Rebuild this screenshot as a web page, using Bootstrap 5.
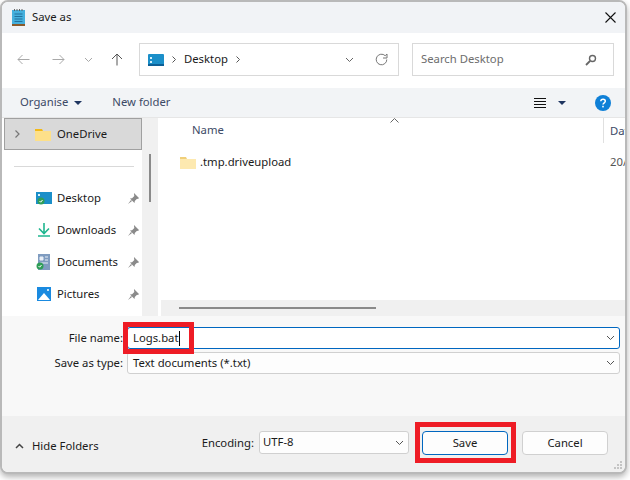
<!DOCTYPE html>
<html lang="en">
<head>
    <meta charset="UTF-8">
    <meta name="viewport" content="width=device-width, initial-scale=1.0">
    <title>Save as</title>
    <link rel="stylesheet" href="https://cdn.jsdelivr.net/npm/bootstrap@5.3.0/dist/css/bootstrap.min.css">
    <style>
        html, body { height: 480px; overflow: hidden; }
        body { background: #fff; font-family: "Noto Sans", "Open Sans", sans-serif; font-size: 11.3px; color: #1a1a1a; }
        .dlg-window { position: relative; width: 627px; height: 474px; background: #fff; border: 2px solid #b9b9b9; border-radius: 8px; overflow: hidden; box-shadow: 0 3px 6px rgba(0,0,0,.3); }
        .dlg-title { height: 31px; background: #f1f3f6; padding-left: 10px; }
        .dlg-title span { margin-left: 7px; }
        .dlg-close { margin-left: auto; margin-right: 9px; }
        .dlg-nav { height: 55px; padding: 10px 10px 12px 15px; }
        .nav-arrows { width: 122px; gap: 0; }
        .address-box { width: 260px; height: 33px; border: 1px solid #d9d9d9; padding: 0 8px; }
        .search-box { width: 202px; height: 33px; border: 1px solid #d9d9d9; padding: 0 8px; margin-left: 13px; color: #6d6d6d; }
        .dlg-cmd { height: 30px; background: #f2f4f6; border-bottom: 1px solid #e6e6e6; padding: 0 14px 0 18px; color: #3d4a66; }
        .dlg-body { height: 198px; }
        .side-pane { width: 140px; padding-left: 2px; }
        .side-sel { height: 32px; background: #d9d9d9; border: 1px solid #a0a0a0; padding-left: 10px; }
        .side-rule { height: 1px; background: #d9d9d9; margin: 16px 8px 15px 10px; }
        .side-row { height: 32px; padding-left: 32px; }
        .side-row span { width: 71px; margin-left: 5px; }
        .side-scroll { width: 16px; background: #f0f0f0; padding: 36px 0 0 7px; }
        .side-thumb { width: 2px; height: 48px; background: #8a8a8a; }
        .list-pane { margin-left: 3px; min-width: 0; position: relative; }
        .list-head { height: 25px; padding-left: 31px; color: #3d4a66; }
        .list-head .col-date { margin-left: auto; width: 22px; height: 25px; border-left: 1px solid #e0e0e0; padding-left: 6px; line-height: 25px; }
        .list-row { height: 24px; margin-top: 7px; padding-left: 19px; white-space: nowrap; }
        .list-row .file-date { margin-left: auto; width: 15px; color: #555; }
        .hscroll { height: 16px; background: #f0f0f0; padding: 7px 0 0 18px; margin-top: auto; }
        .hthumb { width: 197px; height: 2px; background: #8a8a8a; }
        .sort-mark { position: absolute; left: 229px; top: 0; }
        .dlg-form { height: 100px; background: #f8f8f8; padding: 11px 5px 0 0; }
        .form-line { height: 22px; margin-bottom: 3px; }
        .form-line label { width: 125px; text-align: right; padding-right: 4px; }
        .fake-input { flex: 1; height: 22px; border: 1px solid #d0d0d0; border-radius: 3px; background: #fdfdfd; padding: 0 4px 0 5px; }
        .fake-input.is-active { background: #fff; border-color: #0067c0; }
        .caret-bar { display: inline-block; width: 1px; height: 15px; background: #000; }
        .dlg-foot { height: 56px; background: #f0f0f0; padding: 15px 17px 0 13px; }
        .hide-link { margin-top: 7px; }
        .enc-label { margin-left: auto; margin-right: 5px; margin-top: 4px; }
        .enc-select { width: 150px; height: 23px; border: 1px solid #d0d0d0; border-radius: 3px; background: #fdfdfd; padding: 0 4px 0 3px; margin-right: 13px; }
        .dlg-btn { width: 86px; height: 24px; border: 1px solid #d0d0d0; border-radius: 4px; background: #fdfdfd; font-size: 11.3px; padding: 0; color: #1a1a1a; }
        .dlg-btn.is-default { border-color: #0067c0; margin-right: 14px; }
        .red-mark { position: absolute; border: 5px solid #ee1c25; }
        .mark-file { left: 121px; top: 320px; width: 71px; height: 32px; }
        .mark-save { left: 413px; top: 420px; width: 101px; height: 41px; }
        .grip { position: absolute; right: 2px; bottom: 2px; }
    </style>
</head>
<body>
    <div class="dlg-window d-flex flex-column">
        <!-- Title bar -->
        <div class="dlg-title d-flex align-items-center">
            <svg width="13" height="17" viewBox="0 0 13 17"><rect x="0" y="1" width="13" height="15" fill="#45b0dd"/><rect x="0" y="15" width="13" height="2" fill="#8a5a2b"/><path d="M2.500 5h8M2.500 7.500h8M2.500 10h8M2.500 12.500h8" stroke="#1d6a96" stroke-width=".9"/><path d="M2.500 0v2M5 0v2M7.500 0v2M10 0v2" stroke="#555" stroke-width=".9"/></svg>
            <span>Save as</span>
            <svg class="dlg-close" width="11" height="11" viewBox="0 0 11 11"><path d="M.5.500l10 10M10.500.500l-10 10" stroke="#111" stroke-width="1.100"/></svg>
        </div>

        <!-- Back / forward / address / search -->
        <div class="dlg-nav d-flex align-items-center">
            <div class="nav-arrows d-flex align-items-center">
                <svg width="13" height="11" viewBox="0 0 13 11" style="margin-right:22px"><path d="M12.500 5.500H1M5.500 1L1 5.500 5.500 10" fill="none" stroke="#a8a8a8"/></svg>
                <svg width="13" height="11" viewBox="0 0 13 11" style="margin-right:19px"><path d="M.5 5.500H12M7.500 1L12 5.500 7.500 10" fill="none" stroke="#a8a8a8"/></svg>
                <svg width="9" height="6" viewBox="0 0 9 6" style="margin-right:18px"><path d="M1 1l3.500 3.500L8 1" fill="none" stroke="#a8a8a8"/></svg>
                <svg width="12" height="13" viewBox="0 0 12 13"><path d="M6 12.500V1M1 6l5-5 5 5" fill="none" stroke="#555"/></svg>
            </div>
            <div class="address-box d-flex align-items-center">
                <svg width="16" height="12" viewBox="0 0 16 12"><rect width="16" height="12" rx="1" fill="#1b8fc9"/><rect x="2" y="3" width="2" height="2" fill="#d8f1fb"/><rect x="2" y="7" width="2" height="2" fill="#d8f1fb"/><rect y="10" width="16" height="2" fill="#0d5f96"/></svg>
                <svg class="ms-2" width="4" height="7" viewBox="0 0 4 7"><path d="M.5.500l3 3-3 3" fill="none" stroke="#555"/></svg>
                <span class="ms-2">Desktop</span>
                <svg class="ms-2" width="4" height="7" viewBox="0 0 4 7"><path d="M.5.500l3 3-3 3" fill="none" stroke="#555"/></svg>
                <svg class="ms-auto" width="9" height="6" viewBox="0 0 9 6"><path d="M1 1l3.500 3.500L8 1" fill="none" stroke="#666"/></svg>
                <svg style="margin-left:21px;margin-right:2px" width="13" height="13" viewBox="0 0 13 13"><path d="M11.800 6.500a5.300 5.300 0 1 1-1.600-3.800L12 1v4H8" fill="none" stroke="#777"/></svg>
            </div>
            <div class="search-box d-flex align-items-center justify-content-between">
                <span>Search Desktop</span>
                <svg class="me-2" width="12" height="12" viewBox="0 0 12 12"><circle cx="7.500" cy="4.500" r="3" fill="none" stroke="#666" stroke-width="1.400"/><path d="M5 7l-4 4" stroke="#666" stroke-width="1.800"/></svg>
            </div>
        </div>

        <!-- Command bar -->
        <div class="dlg-cmd d-flex align-items-center">
            <span>Organise</span>
            <svg style="margin-left:6px" width="8" height="4" viewBox="0 0 8 4"><path d="M0 0h8L4 4z" fill="#1f3560"/></svg>
            <span style="margin-left:30px">New folder</span>
            <svg class="ms-auto" width="12" height="10" viewBox="0 0 12 10"><path d="M0 .500h12M0 3.500h12M0 6.500h12M0 9.500h12" stroke="#111"/></svg>
            <svg style="margin-left:12px;margin-right:29px" width="8" height="4" viewBox="0 0 8 4"><path d="M0 0h8L4 4z" fill="#1f3560"/></svg>
            <svg width="16" height="16" viewBox="0 0 16 16"><circle cx="8" cy="8" r="8" fill="#0f80d7"/><path d="M5.800 6.200C5.900 3.600 10.300 3.600 10.300 6.200 10.300 7.800 8 7.800 8 9.600" fill="none" stroke="#fff" stroke-width="1.500"/><rect x="7.200" y="10.800" width="1.600" height="1.600" fill="#fff"/></svg>
        </div>

        <!-- Folder tree and file list -->
        <div class="dlg-body d-flex">
            <div class="side-pane flex-shrink-0">
                <div class="side-sel d-flex align-items-center">
                    <svg width="5" height="8" viewBox="0 0 5 8"><path d="M.5.500L4 4 .5 7.500" fill="none" stroke="#777" stroke-width="1.200"/></svg>
                    <svg style="margin-left:15px" width="16" height="13" viewBox="0 0 16 13"><path d="M0 1h7l1 2h8v10H0z" fill="#f3b917"/><rect y="3" width="16" height="10" fill="#fde08a"/></svg>
                    <span style="margin-left:6px">OneDrive</span>
                </div>
                <div class="side-rule"></div>
                <div class="side-row d-flex align-items-center">
                    <svg width="16" height="13" viewBox="0 0 16 13"><rect width="16" height="12" fill="#1b8fc9"/><rect x="2" y="2" width="2" height="2" fill="#d8f1fb"/><circle cx="5" cy="9" r="3.500" fill="#2f9e58"/><path d="M3.500 9l1.200 1.200L6.500 8" fill="none" stroke="#fff"/></svg>
                    <span>Desktop</span>
                    <svg width="11" height="11" viewBox="0 0 11 11"><path d="M6 0l5 5-1 1-1-.3-2.200 2.200-.3 2.100-4.500-4.500 2.100-.3L6.300 3 6 1zM3 7L0 11l4-3z" fill="#8a8a8a"/></svg>
                </div>
                <div class="side-row d-flex align-items-center">
                    <svg width="16" height="14" viewBox="0 0 16 14"><path d="M8 0v10M3 5.500L8 10.500l5-5" fill="none" stroke="#1fb68f" stroke-width="1.600"/><path d="M2 13h12" stroke="#1fb68f" stroke-width="1.600"/></svg>
                    <span>Downloads</span>
                    <svg width="11" height="11" viewBox="0 0 11 11"><path d="M6 0l5 5-1 1-1-.3-2.200 2.200-.3 2.100-4.500-4.500 2.100-.3L6.300 3 6 1zM3 7L0 11l4-3z" fill="#8a8a8a"/></svg>
                </div>
                <div class="side-row d-flex align-items-center">
                    <svg width="16" height="16" viewBox="0 0 16 16"><rect x="2" width="12" height="16" fill="#7f9cc0"/><path d="M4 3h3v3H4zM9 3h3M9 6h3M4 9h8" fill="#e8eef6" stroke="#e8eef6"/><circle cx="4" cy="12" r="3.500" fill="#2f9e58"/><path d="M2.500 12l1.200 1.200L5.500 11" fill="none" stroke="#fff"/></svg>
                    <span>Documents</span>
                    <svg width="11" height="11" viewBox="0 0 11 11"><path d="M6 0l5 5-1 1-1-.3-2.200 2.200-.3 2.100-4.500-4.500 2.100-.3L6.300 3 6 1zM3 7L0 11l4-3z" fill="#8a8a8a"/></svg>
                </div>
                <div class="side-row d-flex align-items-center">
                    <svg width="16" height="14" viewBox="0 0 16 14"><rect x="1" width="14" height="14" fill="#1a8ae0"/><path d="M2 13l6-7 6 7z" fill="#fff"/><circle cx="12" cy="3" r="1" fill="#fff"/></svg>
                    <span>Pictures</span>
                    <svg width="11" height="11" viewBox="0 0 11 11"><path d="M6 0l5 5-1 1-1-.3-2.200 2.200-.3 2.100-4.500-4.500 2.100-.3L6.300 3 6 1zM3 7L0 11l4-3z" fill="#8a8a8a"/></svg>
                </div>
            </div>
            <div class="side-scroll flex-shrink-0"><div class="side-thumb"></div></div>
            <div class="list-pane flex-grow-1 d-flex flex-column">
                <svg class="sort-mark" width="9" height="5" viewBox="0 0 9 5"><path d="M.5 4.500l4-4 4 4" fill="none" stroke="#666"/></svg>
                <div class="list-head d-flex align-items-center"><span>Name</span><span class="col-date">Dat</span></div>
                <div class="list-row d-flex align-items-center">
                    <svg width="16" height="13" viewBox="0 0 16 13"><path d="M0 1h6l1 2h9v10H0z" fill="#f0cf7a"/><rect y="3" width="16" height="10" fill="#fde9b0"/></svg>
                    <span style="margin-left:4px">.tmp.driveupload</span>
                    <span class="file-date">20/</span>
                </div>
                <div class="hscroll"><div class="hthumb"></div></div>
            </div>
        </div>

        <!-- File name and type -->
        <div class="dlg-form">
            <div class="form-line d-flex align-items-center">
                <label>File name:</label>
                <div class="fake-input is-active d-flex align-items-center">
                    <span>Logs.bat</span><span class="caret-bar"></span>
                    <svg class="ms-auto" width="9" height="6" viewBox="0 0 9 6"><path d="M1 1l3.500 3.500L8 1" fill="none" stroke="#555"/></svg>
                </div>
            </div>
            <div class="form-line d-flex align-items-center">
                <label>Save as type:</label>
                <div class="fake-input d-flex align-items-center">
                    <span>Text documents (*.txt)</span>
                    <svg class="ms-auto" width="9" height="6" viewBox="0 0 9 6"><path d="M1 1l3.500 3.500L8 1" fill="none" stroke="#555"/></svg>
                </div>
            </div>
        </div>

        <!-- Footer -->
        <div class="dlg-foot d-flex align-items-start">
            <div class="hide-link d-flex align-items-center">
                <svg width="9" height="6" viewBox="0 0 9 6"><path d="M1 5l3.500-3.500L8 5" fill="none" stroke="#444" stroke-width="1.500"/></svg>
                <span style="margin-left:8px">Hide Folders</span>
            </div>
            <span class="enc-label">Encoding:</span>
            <div class="enc-select d-flex align-items-center">
                <span>UTF-8</span>
                <svg class="ms-auto" width="9" height="6" viewBox="0 0 9 6"><path d="M1 1l3.500 3.500L8 1" fill="none" stroke="#555"/></svg>
            </div>
            <button type="button" class="dlg-btn is-default">Save</button>
            <button type="button" class="dlg-btn">Cancel</button>
        </div>

        <svg class="grip" width="9" height="9" viewBox="0 0 9 9"><path d="M6 0h2v2H6zM3 3h2v2H3zM6 3h2v2H6zM0 6h2v2H0zM3 6h2v2H3zM6 6h2v2H6z" fill="#c4c4c4"/></svg>
        <div class="red-mark mark-file"></div>
        <div class="red-mark mark-save"></div>
    </div>

    <script src="https://cdn.jsdelivr.net/npm/bootstrap@5.3.0/dist/js/bootstrap.bundle.min.js"></script>
</body>
</html>
